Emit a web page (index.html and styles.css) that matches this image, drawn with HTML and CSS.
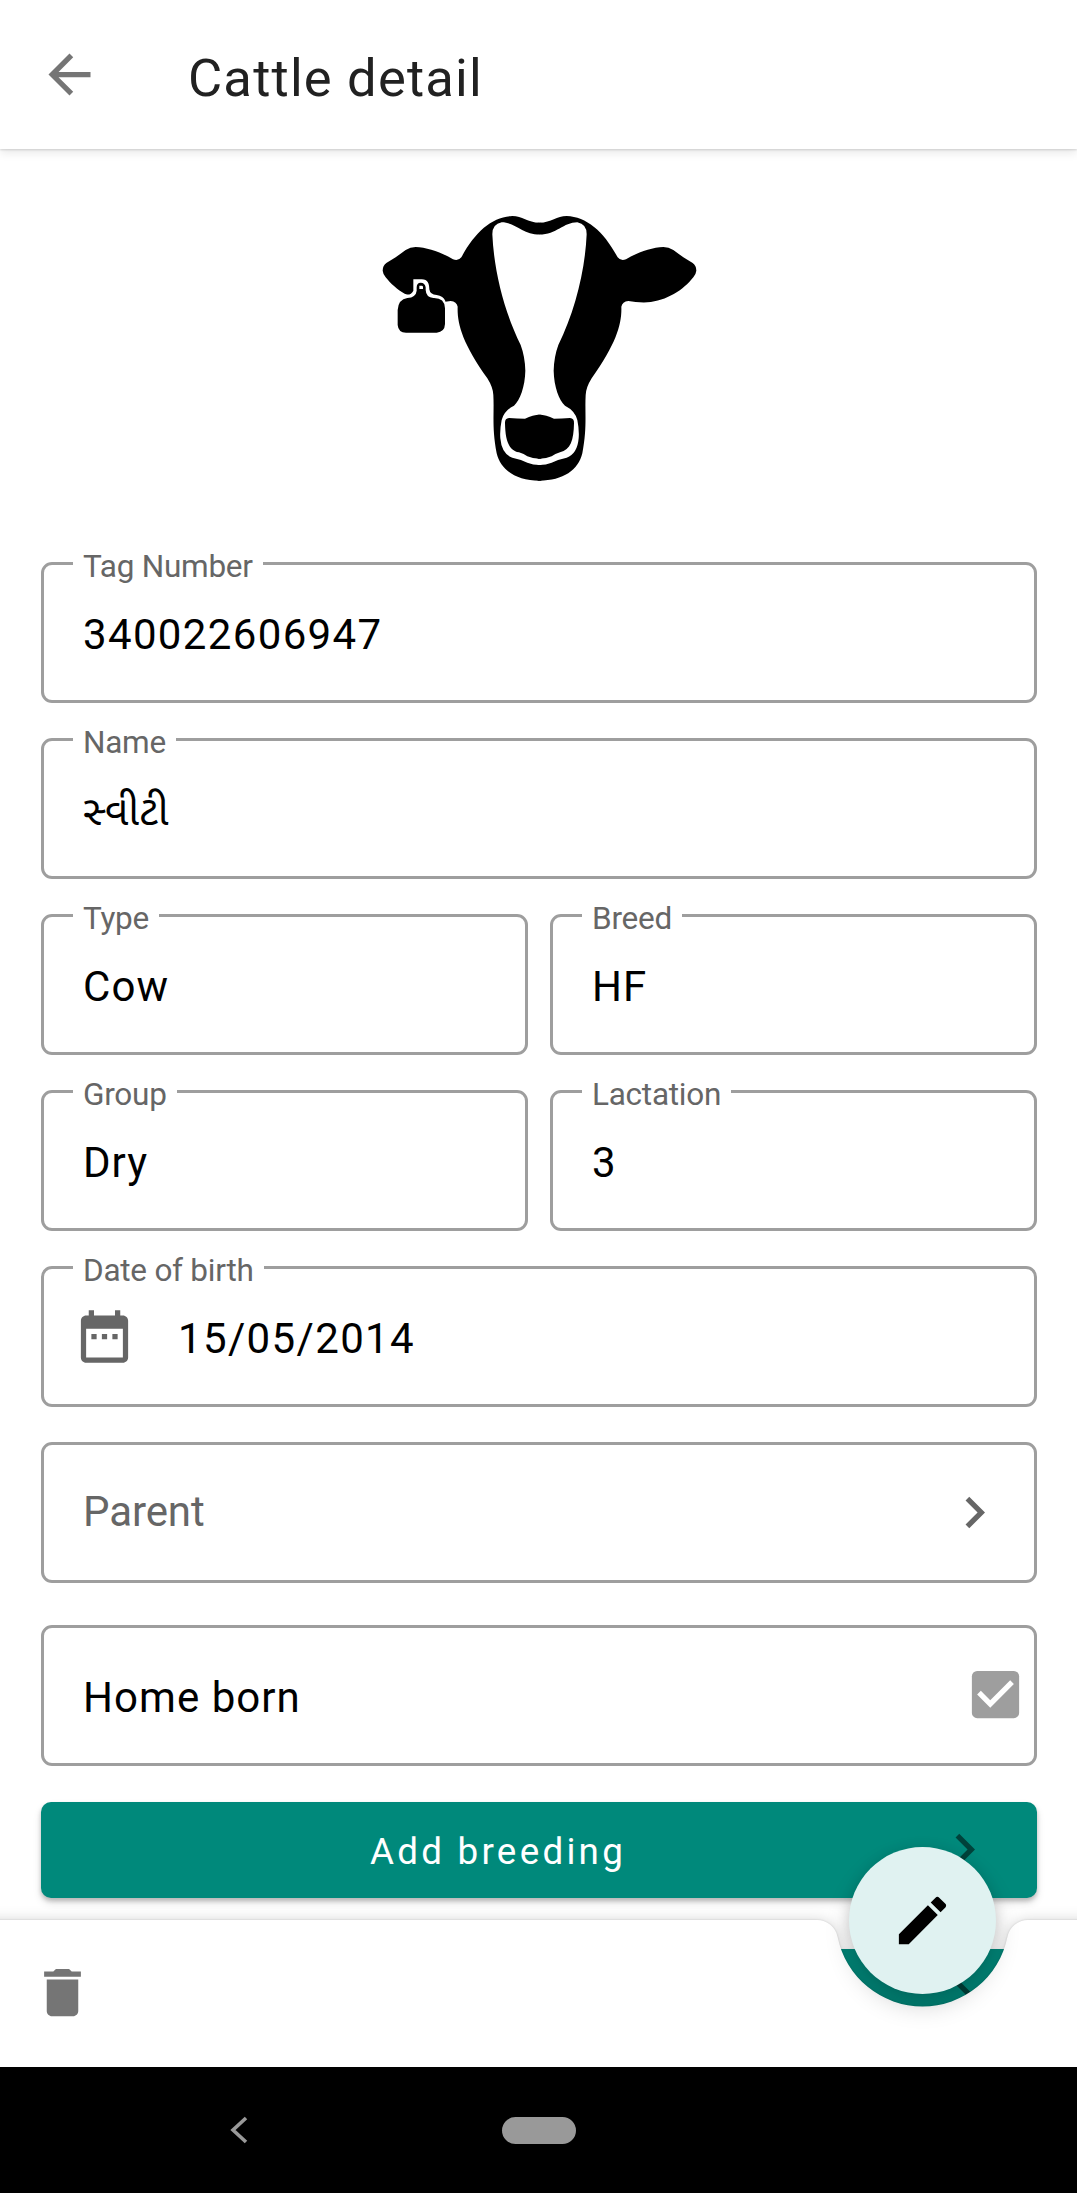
FILE: index.html
```html
<!DOCTYPE html>
<html lang="en">
<head>
<meta charset="utf-8">
<title>Cattle detail</title>
<link rel="stylesheet" href="styles.css">
</head>
<body>
<div class="app">
  <header class="topbar">
    <svg class="icon" viewBox="0 0 24 24"><path d="M20 11H7.83l5.59-5.59L12 4l-8 8 8 8 1.41-1.41L7.83 13H20v-2z"/></svg>
    <h1 class="title">Cattle detail</h1>
  </header>
  <main class="content">
    <svg class="cow" viewBox="0 0 1020 900">
      <defs>
        <path id="head" d="M503 68H508C545 68 560 48 590 48C650 50 702 95 743 172Q752 184 768 178C800 158 845 142 880 141Q896 141 910 150L940 172L968 189Q979 197 979 212Q978 222 970 232C940 270 890 303 832 307Q800 308 775 303Q757 305 754 320C756 370 740 430 665 535Q648 562 647 585C644 640 652 680 637 760C625 810 580 842 508 842H503Z"/>
        <path id="blaze" d="M503 104H508C560 104 580 67 622 67Q650 72 650 103C645 215 614 335 565 435Q552 470 551 512C552 560 567 600 585 617Q615 632 622 660Q628 690 626 715Q622 762 590 773Q565 778 545 788Q528 795 508 795H503Z"/>
        <path id="nose" d="M503 644H508Q528 644 552 656Q575 656 600 654Q613 655 612 670C611 720 602 750 570 757Q555 762 545 769Q530 776 508 776H503Z"/>
      </defs>
      <use href="#head"/><use href="#head" transform="translate(1017) scale(-1 1)"/>
      <g class="cow-light"><use href="#blaze"/><use href="#blaze" transform="translate(1017) scale(-1 1)"/></g>
      <use href="#nose"/><use href="#nose" transform="translate(1017) scale(-1 1)"/>
      <path class="cow-light" d="M130 238H155C174 238 178 252 178 268Q180 284 200 285Q220 288 226 303V330H100V281L107 283Q122 287 130 272Z"/>
      <path fill-rule="evenodd" d="M152 248Q140 248 140 262V272Q138 292 112 294Q85 298 83 330V375Q85 398 108 398H200Q224 396 225 372V325Q224 293 190 294Q168 292 167 270V262Q165 248 152 248ZM148 257H155Q159 257 159 261V267H148Z"/>
    </svg>
    <section class="form">
      <div class="field"><span class="label">Tag Number</span><span class="value digits">340022606947</span></div>
      <div class="field"><span class="label">Name</span><span class="value gujarati" lang="gu">સ્વીટી</span></div>
      <div class="row">
        <div class="field"><span class="label">Type</span><span class="value">Cow</span></div>
        <div class="field"><span class="label">Breed</span><span class="value">HF</span></div>
      </div>
      <div class="row">
        <div class="field"><span class="label">Group</span><span class="value">Dry</span></div>
        <div class="field"><span class="label">Lactation</span><span class="value">3</span></div>
      </div>
      <div class="field">
        <span class="label">Date of birth</span>
        <div class="dated">
          <svg class="icon icon-field" viewBox="0 0 24 24"><path d="M9 11H7v2h2v-2zm4 0h-2v2h2v-2zm4 0h-2v2h2v-2zm2-7h-1V2h-2v2H8V2H6v2H5c-1.11 0-1.99.9-1.99 2L3 20c0 1.1.89 2 2 2h14c1.1 0 2-.9 2-2V6c0-1.1-.9-2-2-2zm0 16H5V9h14v11z"/></svg>
          <span class="value digits">15/05/2014</span>
        </div>
      </div>
      <div class="field field-link">
        <span class="placeholder">Parent</span>
        <svg class="icon icon-field" viewBox="0 0 24 24"><path d="M10 6L8.59 7.41 13.17 12l-4.58 4.59L10 18l6-6z"/></svg>
      </div>
      <div class="field field-check">
        <span class="value">Home born</span>
        <svg class="icon icon-check" viewBox="0 0 24 24"><rect x="3" y="3" width="18" height="18" rx="2"/><path class="tick" d="M10 17l-5-5 1.41-1.41L10 14.17l7.59-7.59L19 8z"/></svg>
      </div>
      <div class="actions">
        <div class="button">
          <span class="button-text">Add breeding</span>
          <svg class="icon button-chevron" viewBox="0 0 24 24"><path d="M10 6L8.59 7.41 13.17 12l-4.58 4.59L10 18l6-6z"/></svg>
        </div>
        <div class="button">
          <svg class="icon button-chevron" viewBox="0 0 24 24"><path d="M10 6L8.59 7.41 13.17 12l-4.58 4.59L10 18l6-6z"/></svg>
        </div>
      </div>
    </section>
  </main>
  <footer class="bottombar">
    <svg class="bar-shape" viewBox="0 0 1077 147"><path d="M-40 0H817A21 21 0 0 1 837.6 16.9A86.6 86.6 0 0 0 1007.4 16.9A21 21 0 0 1 1028 0H1117V200H-40Z"/></svg>
    <svg class="icon trash" viewBox="0 0 24 24"><path d="M6 19c0 1.1.9 2 2 2h8c1.1 0 2-.9 2-2V7H6v12zM19 4h-3.5l-1-1h-5l-1 1H5v2h14V4z"/></svg>
    <div class="fab">
      <svg class="icon" viewBox="0 0 24 24"><path d="M3 17.25V21h3.75L17.81 9.94l-3.75-3.75L3 17.25zM20.71 7.04c.39-.39.39-1.02 0-1.41l-2.34-2.34c-.39-.39-1.02-.39-1.41 0l-1.83 1.83 3.75 3.75 1.83-1.83z"/></svg>
    </div>
  </footer>
  <nav class="sysnav">
    <svg class="sysback" viewBox="0 0 18 28"><path d="M16 2L3 14L16 26"/></svg>
    <span class="pill"></span>
  </nav>
</div>
</body>
</html>
```
FILE: styles.css
```css
* { box-sizing: border-box; }
body { margin: 0; background: #fff; font-family: Roboto, "Noto Sans Gujarati", "Noto Sans", sans-serif; }
.app { width: 1077px; height: 2193px; display: flex; flex-direction: column; overflow: hidden; }
.icon { width: 63px; height: 63px; display: block; flex: none; }

.topbar { position: relative; z-index: 1; flex: none; height: 149px; padding-left: 38px; display: flex; align-items: center; background: #fff; box-shadow: 0 1px 2px rgba(0,0,0,.14), 0 4px 9px rgba(0,0,0,.09); }
.topbar .icon { fill: #757575; }
.title { margin: 6px 0 0 87px; font-size: 52.5px; font-weight: 400; line-height: 62px; letter-spacing: 1.2px; color: #212121; }

.content { flex: none; height: 1918px; padding-top: 51px; overflow: hidden; }
.cow { display: block; width: 340px; height: 300px; margin-left: 370px; }
.cow-light { fill: #fff; }

.form { padding: 62px 40px 0 41px; display: flex; flex-direction: column; gap: 35px; }
.row { display: grid; grid-template-columns: 1fr 1fr; gap: 22px; }
.field { height: 141px; border: 3px solid #9e9e9e; border-radius: 11px; }
.label { display: block; width: fit-content; height: 38px; margin: -17px 0 0 29px; padding: 0 10px; background: #fff; color: #666; font-size: 31.5px; line-height: 38px; letter-spacing: -.25px; }
.value { display: block; margin: 24px 0 0 39px; font-size: 42px; line-height: 50px; letter-spacing: 1.05px; color: #000; white-space: nowrap; }
.digits { letter-spacing: 1.35px; }
.gujarati { font-size: 41px; letter-spacing: 0; }
.dated { display: flex; align-items: flex-start; padding: 15px 0 0 29px; }
.dated .value { margin: 9px 0 0 42px; }
.icon-field { fill: #666; }
.field-link { display: flex; justify-content: space-between; align-items: center; padding: 0 28px 0 39px; }
.placeholder { color: #666; font-size: 42px; line-height: 50px; letter-spacing: -.1px; margin-top: -1px; }
.field-check { margin-top: 7px; display: flex; justify-content: space-between; align-items: center; padding-right: 7px; }
.field-check .value { margin-top: 5px; }
.icon-check { fill: #9e9e9e; margin-top: -2px; }
.tick { fill: #fff; }

.actions { display: flex; flex-direction: column; gap: 51px; margin-top: 1px; }
.button { position: relative; height: 96px; flex: none; display: flex; align-items: center; justify-content: center; border-radius: 10px; background: #00897b; box-shadow: 0 3px 4px rgba(0,0,0,.2), 0 5px 8px rgba(0,0,0,.12); }
.button-text { padding: 3px 82px 0 0; color: #fff; font-size: 36.75px; letter-spacing: 3.28px; line-height: 44px; white-space: nowrap; }
.button-chevron { position: absolute; right: 41px; top: 16px; fill: #00423b; }

.bottombar { position: relative; z-index: 2; flex: none; height: 147px; margin-top: -147px; padding: 41px 0 0 31px; }
.bar-shape { position: absolute; left: 0; top: 0; width: 1077px; height: 147px; overflow: visible; fill: #fff; filter: drop-shadow(0 0 1px rgba(0,0,0,.15)) drop-shadow(0 0 7px rgba(0,0,0,.16)); }
.trash { position: relative; fill: #757575; }
.fab { position: absolute; left: 849px; top: -73.5px; width: 147px; height: 147px; border-radius: 50%; display: flex; align-items: center; justify-content: center; background: #e0f2f1; box-shadow: 0 12px 24px rgba(0,0,0,.17), 0 3px 14px rgba(0,0,0,.12); }

.sysnav { position: relative; z-index: 3; flex: none; height: 126px; display: flex; align-items: center; padding-left: 230px; background: #000; }
.sysback { width: 18px; height: 28px; fill: none; stroke: #999; stroke-width: 3.6; }
.pill { width: 74px; height: 27px; margin-left: 254px; border-radius: 14px; background: #999; }
```
